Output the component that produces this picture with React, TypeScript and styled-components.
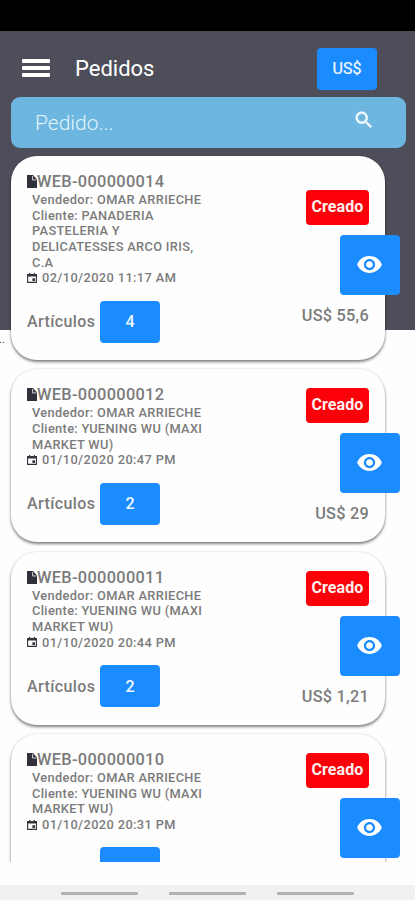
import React from 'react';
import styled, { createGlobalStyle } from 'styled-components';

const Global = createGlobalStyle`
  * { box-sizing: border-box; }
  body { margin: 0; background: #fefefe; font-family: Roboto, sans-serif; }
`;

const Screen = styled.div`
  height: 900px;
  width: 415px;
  overflow: hidden;
  display: flex;
  flex-direction: column;
  background: linear-gradient(#4d4e59 0 330px, #fefefe 330px);
`;
const StatusBar = styled.div`
  height: 31px;
  flex: none;
  background: #000;
`;
const Header = styled.header`
  height: 66px;
  flex: none;
  display: flex;
  align-items: center;
  padding: 10px 38px 0 22px;
`;
const Burger = styled.div`
  width: 28px;
  display: flex;
  flex-direction: column;
  gap: 3px;
  margin-top: -3px;
`;
const BurgerLine = styled.span`
  height: 4px;
  border-radius: 1px;
  background: #fff;
`;
const Title = styled.h1`
  flex: 1;
  margin: 0 0 0 25px;
  color: #fff;
  font-size: 22px;
  line-height: 26px;
  font-weight: 400;
  letter-spacing: 0;
`;
const BlueButton = styled.button<{ $w: number; $h: number }>`
  width: ${(p) => p.$w}px;
  height: ${(p) => p.$h}px;
  flex: none;
  padding: 0;
  border: 0;
  border-radius: 4px;
  display: flex;
  align-items: center;
  justify-content: center;
  background: #1b8cff;
  color: #f2f8ff;
  font: 500 16px Roboto, sans-serif;
`;
const CurrencyButton = styled(BlueButton)`
  padding-bottom: 1px;
  font-weight: 400;
  -webkit-text-stroke: 0.2px #f2f8ff;
`;
const Search = styled.div`
  height: 51px;
  flex: none;
  margin: 0 9px 0 11px;
  padding: 0 31px 0 24px;
  border-radius: 9px;
  display: flex;
  align-items: center;
  justify-content: space-between;
  background: #6cb6e0;
  color: #e2f4fa;
  font-size: 21px;
  font-weight: 300;
`;
const SearchIcon = styled.svg`
  width: 22px;
  height: 22px;
  margin-top: -5px;
  fill: #f4fcff;
  stroke: #f4fcff;
  stroke-width: 0.6;
`;
const List = styled.main`
  position: relative;
  height: 714px;
  flex: none;
  overflow: hidden;
  padding: 8px 30px 0 11px;
  display: flex;
  flex-direction: column;
  gap: 9.4px;
`;
const Stray = styled.span`
  position: absolute;
  left: -1px;
  top: 186px;
  font-size: 11px;
  line-height: 12px;
  color: #444;
`;
const Card = styled.article`
  flex: none;
  display: flex;
  justify-content: space-between;
  padding: 16px 16px 17px;
  border-radius: 26px;
  background: #fefefe;
  box-shadow: 0 2px 3px rgba(0, 0, 0, 0.48), 0 0 2px rgba(0, 0, 0, 0.15);
`;
const Info = styled.div`
  width: 200px;
  color: #7b7b7b;
  font-weight: 500;
`;
const Code = styled.div`
  height: 20.2px;
  display: flex;
  align-items: center;
  font-size: 16.4px;
  line-height: 20px;
  letter-spacing: 0.3px;
`;
const Details = styled.div`
  width: 184px;
  padding-left: 5px;
  font-size: 12.8px;
  line-height: 15.6px;
  letter-spacing: 0.34px;
  white-space: nowrap;
`;
const DateRow = styled.div`
  height: 15.6px;
  display: flex;
  align-items: center;
  gap: 5px;
  font-size: 12.8px;
  letter-spacing: 0.4px;
`;
const DocIcon = styled.svg`
  width: 10px;
  height: 13px;
  flex: none;
  margin-top: -1px;
`;
const CalIcon = styled.svg`
  width: 10px;
  height: 10px;
  flex: none;
`;
const Articles = styled.div`
  display: flex;
  align-items: center;
  margin-top: 15px;
`;
const ArticlesLabel = styled.span`
  width: 73px;
  font-size: 16px;
  letter-spacing: 0.4px;
`;
const Side = styled.div`
  display: flex;
  flex-direction: column;
  align-items: flex-end;
  justify-content: center;
  padding-top: 3px;
`;
const Badge = styled.div`
  width: 63px;
  height: 35px;
  border-radius: 4px;
  background: #fb0008;
  color: #fff0ee;
  font-size: 16px;
  font-weight: 700;
  line-height: 34px;
  text-align: center;
  letter-spacing: 0.1px;
`;
const ViewButton = styled(BlueButton)`
  margin: 10px -31px 10px 0;
`;
const EyeIcon = styled.svg`
  width: 27px;
  height: 27px;
  margin: -1px 1px 0 0;
  fill: #fff;
`;
const Price = styled.div`
  color: #7b7b7b;
  font-size: 16.3px;
  line-height: 22px;
  font-weight: 500;
  letter-spacing: 0.25px;
`;
const NavBar = styled.nav`
  height: 15px;
  flex: none;
  margin-top: auto;
  padding: 6.5px 61px 0;
  display: flex;
  justify-content: space-between;
  background: #f1f1f1;
`;
const NavLine = styled.span`
  width: 77px;
  height: 3.5px;
  border-radius: 1px;
  background: #b2b2b2;
`;

interface Order {
  code: string;
  client: string[];
  date: string;
  items: number;
  price: string;
}

const yuening = ['YUENING WU (MAXI', 'MARKET WU)'];
const orders: Order[] = [
  {
    code: 'WEB-000000014',
    client: ['PANADERIA', 'PASTELERIA Y', 'DELICATESSES ARCO IRIS,', 'C.A'],
    date: '02/10/2020 11:17 AM',
    items: 4,
    price: '55,6',
  },
  { code: 'WEB-000000012', client: yuening, date: '01/10/2020 20:47 PM', items: 2, price: '29' },
  { code: 'WEB-000000011', client: yuening, date: '01/10/2020 20:44 PM', items: 2, price: '1,21' },
  { code: 'WEB-000000010', client: yuening, date: '01/10/2020 20:31 PM', items: 2, price: '29' },
];

function OrderCard({ order }: { order: Order }) {
  return (
    <Card>
      <Info>
        <Code>
          <DocIcon viewBox="0 0 10 13">
            <path d="M0 0H6L10 4.5V13H0Z" fill="#30313a" />
            <path d="M5.6 1V5H9.2" fill="none" stroke="#fefefe" strokeWidth="0.8" />
          </DocIcon>
          {order.code}
        </Code>
        <Details>
          <div>Vendedor: OMAR ARRIECHE</div>
          {order.client.map((line, i) => (
            <div key={line}>{i === 0 ? `Cliente: ${line}` : line}</div>
          ))}
        </Details>
        <DateRow>
          <CalIcon viewBox="0 0 10 10">
            <path d="M0.6 1.5H9.4V9.4H0.6Z" fill="none" stroke="#34353c" strokeWidth="1.1" />
            <path d="M0 1H10V3.6H0ZM2 0H3.2V1H2ZM6.8 0H8V1H6.8ZM5.4 5.3H8V7.9H5.4Z" fill="#34353c" />
          </CalIcon>
          {order.date}
        </DateRow>
        <Articles>
          <ArticlesLabel>Artículos</ArticlesLabel>
          <BlueButton $w={60} $h={42}>{order.items}</BlueButton>
        </Articles>
      </Info>
      <Side>
        <Badge>Creado</Badge>
        <ViewButton $w={60} $h={60} aria-label="Ver pedido">
          <EyeIcon viewBox="0 0 24 24">
            <path d="M12 4.5C7 4.5 2.73 7.61 1 12c1.73 4.39 6 7.5 11 7.5s9.27-3.11 11-7.5c-1.73-4.39-6-7.5-11-7.5zM12 17c-2.76 0-5-2.24-5-5s2.24-5 5-5 5 2.24 5 5-2.24 5-5 5zm0-8c-1.66 0-3 1.34-3 3s1.34 3 3 3 3-1.34 3-3-1.34-3-3-3z" />
          </EyeIcon>
        </ViewButton>
        <Price>US$ {order.price}</Price>
      </Side>
    </Card>
  );
}

export default function App() {
  return (
    <Screen>
      <Global />
      <StatusBar />
      <Header>
        <Burger>
          <BurgerLine />
          <BurgerLine />
          <BurgerLine />
        </Burger>
        <Title>Pedidos</Title>
        <CurrencyButton $w={60} $h={42}>US$</CurrencyButton>
      </Header>
      <Search>
        <span>Pedido...</span>
        <SearchIcon viewBox="0 0 24 24">
          <path d="M15.5 14h-.79l-.28-.27C15.41 12.59 16 11.11 16 9.5 16 5.91 13.09 3 9.5 3S3 5.91 3 9.5 5.91 16 9.5 16c1.61 0 3.09-.59 4.23-1.57l.27.28v.79l5 4.99L20.49 19l-4.99-5zm-6 0C7.01 14 5 11.99 5 9.5S7.01 5 9.5 5 14 7.01 14 9.5 11.99 14 9.5 14z" />
        </SearchIcon>
      </Search>
      <List>
        <Stray>..</Stray>
        {orders.map((order) => (
          <OrderCard key={order.code} order={order} />
        ))}
      </List>
      <NavBar>
        <NavLine />
        <NavLine />
        <NavLine />
      </NavBar>
    </Screen>
  );
}
